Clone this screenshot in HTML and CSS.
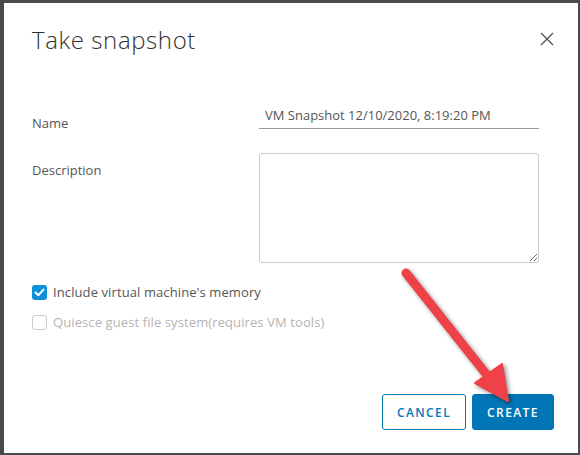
FILE: index.html
```html
<!DOCTYPE html>
<html>
<head>
<meta charset="utf-8">
<link rel="stylesheet" href="styles.css">
</head>
<body>
<div class="dialog">
  <div class="header">
    <h1 class="title">Take snapshot</h1>
    <svg class="close" width="14" height="14" viewBox="0 0 14 14"><path d="M1 1 L13 13 M13 1 L1 13" stroke="#555" stroke-width="1.4" fill="none"/></svg>
  </div>
  <div class="row row-name">
    <label class="label label-name">Name</label>
    <input class="input" type="text" value="VM Snapshot 12/10/2020, 8:19:20 PM">
  </div>
  <div class="row row-desc">
    <label class="label label-desc">Description</label>
    <textarea class="textarea"></textarea>
  </div>
  <div class="check check-1">
    <span class="box box-on"><svg width="11" height="9" viewBox="0 0 11 9"><path d="M1.5 4.5 L4.3 7.2 L9.5 1.6" stroke="#fff" stroke-width="2" fill="none" stroke-linecap="round" stroke-linejoin="round"/></svg></span>
    <span class="check-label">Include virtual machine's memory</span>
  </div>
  <div class="check check-2">
    <span class="box box-off"></span>
    <span class="check-label disabled">Quiesce guest file system(requires VM tools)</span>
  </div>
  <div class="footer">
    <button class="btn btn-outline">CANCEL</button>
    <button class="btn btn-primary">CREATE</button>
  </div>
</div>
<svg class="arrow" width="580" height="455" viewBox="0 0 580 455">
  <g class="arrow-g">
    <line x1="406" y1="273" x2="494" y2="384" stroke="#ef4248" stroke-width="9" stroke-linecap="round"/>
    <polygon points="475,383 502,364 508,401" fill="#ef4248" stroke="#ef4248" stroke-width="2" stroke-linejoin="round"/>
  </g>
</svg>
</body>
</html>
```
FILE: styles.css
```css
html, body {
  margin: 0;
  padding: 0;
}
body {
  background: #4a4a4a;
  width: 580px;
  height: 455px;
  position: relative;
  overflow: hidden;
  font-family: "Open Sans", "Liberation Sans", sans-serif;
}
.dialog {
  position: absolute;
  left: 4px;
  top: 3px;
  width: 574px;
  height: 450px;
  background: #fff;
  box-sizing: border-box;
  padding: 0 24px 23px 28px;
  display: flex;
  flex-direction: column;
}
.header {
  display: flex;
  align-items: flex-start;
  justify-content: space-between;
  padding-top: 21px;
}
.title {
  margin: 0;
  font-size: 24px;
  font-weight: 300;
  line-height: 32px;
  color: #313131;
  letter-spacing: 0.6px;
}
.close {
  margin-top: 8px;
}
.row {
  display: flex;
  align-items: flex-start;
}
.label {
  width: 227px;
  flex: none;
  font-size: 13px;
  line-height: 18px;
  color: #565656;
}
.row-name {
  margin-top: 48px;
}
.label-name {
  margin-top: 10px;
}
.input {
  width: 280px;
  height: 25px;
  box-sizing: border-box;
  border: none;
  border-bottom: 1px solid #9a9a9a;
  padding: 0 0 2px 6px;
  margin: 0;
  font-family: inherit;
  font-size: 13px;
  color: #565656;
  outline: none;
}
.row-desc {
  margin-top: 21px;
}
.label-desc {
  margin-top: 8px;
}
.textarea {
  width: 280px;
  height: 110px;
  box-sizing: border-box;
  border: 1px solid #cccccc;
  border-radius: 3px;
  margin: 0;
  padding: 4px;
  font-family: inherit;
}
.check {
  display: flex;
  align-items: center;
  height: 18px;
}
.check-1 {
  margin-top: 20px;
}
.check-2 {
  margin-top: 12px;
}
.box {
  width: 15px;
  height: 15px;
  box-sizing: border-box;
  border-radius: 3px;
  flex: none;
  display: flex;
  align-items: center;
  justify-content: center;
  margin-right: 6px;
}
.box-on {
  background: #0b8fd6;
}
.box-off {
  border: 1px solid #cccccc;
  background: #fff;
}
.check-label {
  font-size: 13px;
  color: #565656;
  line-height: 18px;
  letter-spacing: 0.1px;
}
.check-label.disabled {
  color: #b4b4b4;
}
.footer {
  margin-top: auto;
  display: flex;
  justify-content: flex-end;
  gap: 6px;
}
.btn {
  height: 36px;
  box-sizing: border-box;
  border-radius: 3px;
  font-family: inherit;
  font-size: 12px;
  font-weight: 600;
  letter-spacing: 1.4px;
  padding: 0;
  margin: 0;
}
.btn-outline {
  width: 84px;
  background: #fff;
  border: 1px solid #0079b8;
  color: #0079b8;
}
.btn-primary {
  width: 82px;
  background: #0076b6;
  border: 1px solid #0076b6;
  color: #fff;
}
.arrow {
  position: absolute;
  left: 0;
  top: 0;
  pointer-events: none;
}
.arrow-g {
  filter: drop-shadow(2px 2px 2px rgba(0, 0, 0, 0.45));
}
```
